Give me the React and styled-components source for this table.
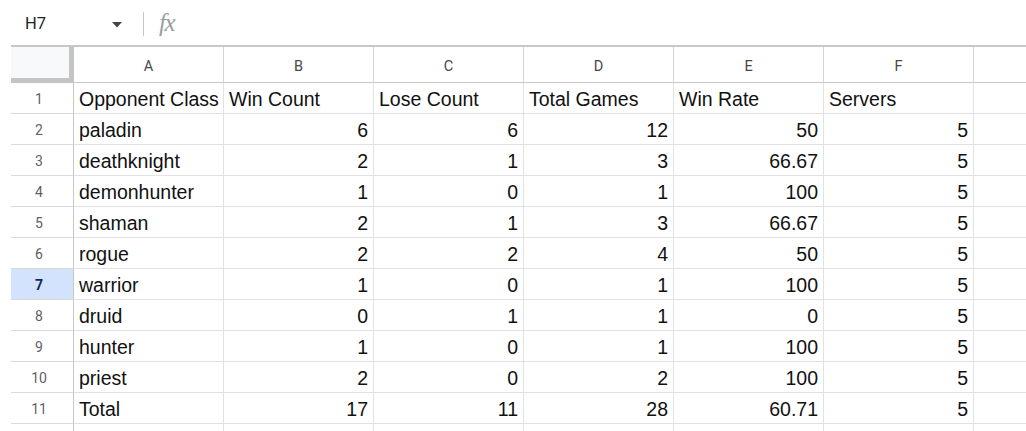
import React from "react";
import styled, { createGlobalStyle } from "styled-components";

const Global = createGlobalStyle`
  html, body { margin: 0; padding: 0; background: #fff; overflow: hidden; }
  body { font-family: "Liberation Sans", Arial, sans-serif; }
`;

const Page = styled.div`
  width: 1026px;
  height: 431px;
  overflow: hidden;
  display: flex;
  flex-direction: column;
`;

const FormulaBar = styled.div`
  height: 45px;
  display: flex;
  align-items: center;
  padding-left: 25px;
  box-sizing: border-box;
  flex-shrink: 0;
`;

const NameBox = styled.div`
  width: 87px;
  font-family: Roboto, "Liberation Sans", sans-serif;
  font-size: 16.5px;
  color: #1f1f1f;
  padding-top: 2px;
`;

const Caret = styled.svg`
  width: 10px;
  height: 6px;
  margin-top: 4px;
`;

const Divider = styled.div`
  width: 1px;
  height: 24px;
  background: #c4c7c5;
  margin: 2px 15px 0 21px;
`;

const Fx = styled.span`
  font-family: "Liberation Serif", serif;
  font-style: italic;
  font-size: 25px;
  color: #9a9da1;
  letter-spacing: -1.5px;
  margin-top: 0px;
`;

const SheetArea = styled.div`
  padding-left: 11px;
  flex: 1;
  overflow: hidden;
`;

const Grid = styled.div`
  display: grid;
  grid-template-columns: 63px repeat(7, 150px);
  grid-template-rows: 36px;
  grid-auto-rows: 31px;
  border-top: 2px solid #c7c7c7;
`;

const Corner = styled.div`
  box-sizing: border-box;
  background: #f8f9fa;
  border-right: 5px solid #c4c4c4;
  border-bottom: 5px solid #c4c4c4;
`;

const ColHead = styled.div`
  box-sizing: border-box;
  border-right: 1px solid #d5d5d5;
  border-bottom: 1px solid #c7c7c7;
  display: flex;
  align-items: center;
  justify-content: center;
  font-family: Roboto, "Liberation Sans", sans-serif;
  font-size: 14.5px;
  color: #474747;
  padding-top: 4px;
`;

const RowHead = styled.div`
  box-sizing: border-box;
  border-right: 1px solid #c7c7c7;
  border-bottom: 1px solid #dadada;
  display: flex;
  align-items: center;
  justify-content: center;
  padding-right: 6px;
  padding-top: 2px;
  font-family: Roboto, "Liberation Sans", sans-serif;
  font-size: 14px;
  background: ${(p) => (p.$active ? "#d3e3fd" : "#fff")};
  color: ${(p) => (p.$active ? "#0b2a5c" : "#5f5f5f")};
  font-weight: ${(p) => (p.$active ? 700 : 400)};
`;

const Cell = styled.div`
  box-sizing: border-box;
  border-right: 1px solid #e2e2e3;
  border-bottom: 1px solid #e2e2e3;
  display: flex;
  align-items: center;
  justify-content: ${(p) => (p.$num ? "flex-end" : "flex-start")};
  padding: 2px 5px 0;
  font-size: 19.5px;
  color: #111;
  white-space: nowrap;
  overflow: visible;
  line-height: 28px;
`;

const cols = ["A", "B", "C", "D", "E", "F", ""];

const rows = [
  ["Opponent Class", "Win Count", "Lose Count", "Total Games", "Win Rate", "Servers"],
  ["paladin", 6, 6, 12, 50, 5],
  ["deathknight", 2, 1, 3, 66.67, 5],
  ["demonhunter", 1, 0, 1, 100, 5],
  ["shaman", 2, 1, 3, 66.67, 5],
  ["rogue", 2, 2, 4, 50, 5],
  ["warrior", 1, 0, 1, 100, 5],
  ["druid", 0, 1, 1, 0, 5],
  ["hunter", 1, 0, 1, 100, 5],
  ["priest", 2, 0, 2, 100, 5],
  ["Total", 17, 11, 28, 60.71, 5],
];

export default function App() {
  return (
    <Page>
      <Global />
      <FormulaBar>
        <NameBox>H7</NameBox>
        <Caret viewBox="0 0 10 6">
          <path d="M0 0 L10 0 L5 5.5 Z" fill="#444746" />
        </Caret>
        <Divider />
        <Fx>fx</Fx>
      </FormulaBar>
      <SheetArea>
        <Grid>
          <Corner />
          {cols.map((c, i) => (
            <ColHead key={i}>{c}</ColHead>
          ))}
          {rows.map((r, ri) => (
            <React.Fragment key={ri}>
              <RowHead $active={ri === 6}>{ri + 1}</RowHead>
              {r.map((v, ci) => (
                <Cell key={ci} $num={typeof v === "number"}>
                  {v}
                </Cell>
              ))}
              <Cell />
            </React.Fragment>
          ))}
          <RowHead />
          {cols.map((c, i) => (
            <Cell key={i} />
          ))}
        </Grid>
      </SheetArea>
    </Page>
  );
}
